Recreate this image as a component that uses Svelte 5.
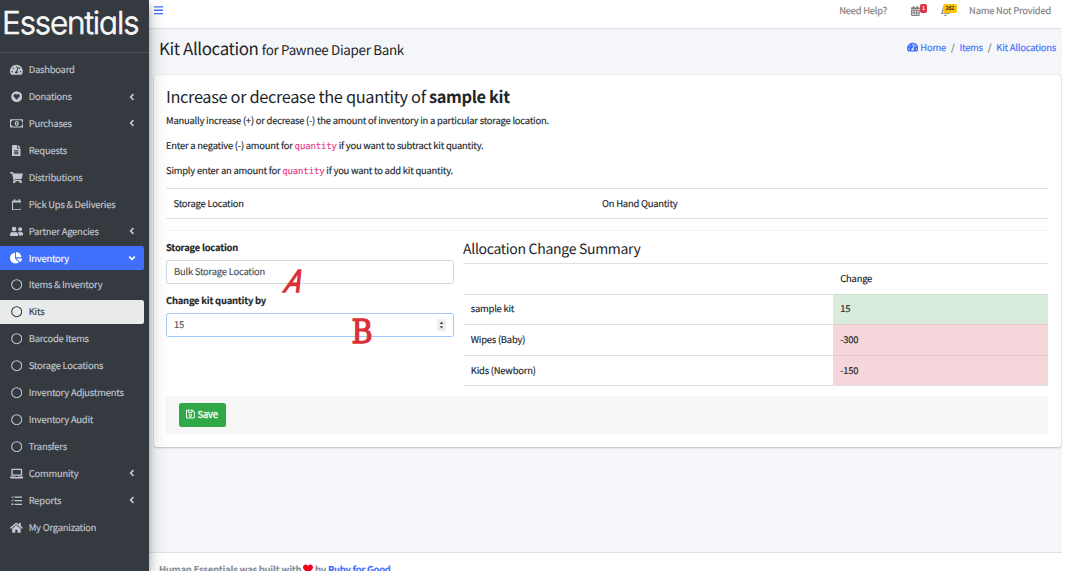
<script>
  const speedo = 'M288 32C128.94 32 0 160.94 0 320c0 52.8 14.25 102.26 39.06 144.8 5.61 9.62 16.3 15.2 27.44 15.2h443c11.14 0 21.83-5.58 27.44-15.2C561.75 422.26 576 372.8 576 320c0-159.06-128.94-288-288-288zm0 64c14.71 0 26.58 10.13 30.32 23.65-1.11 2.26-2.64 4.23-3.45 6.67l-9.22 27.67c-5.13 3.49-10.97 6.01-17.64 6.01-17.67 0-32-14.33-32-32S270.33 96 288 96zM96 384c-17.67 0-32-14.33-32-32s14.33-32 32-32 32 14.33 32 32-14.33 32-32 32zm48-160c-17.67 0-32-14.33-32-32s14.33-32 32-32 32 14.33 32 32-14.33 32-32 32zm246.77-72.41l-61.33 184C343.13 347.33 352 364.54 352 384c0 11.72-3.38 22.55-8.88 32H232.88c-5.5-9.45-8.88-20.28-8.88-32 0-33.94 26.5-61.43 59.9-63.59l61.34-184.01c4.17-12.56 17.73-19.45 30.36-15.17 12.57 4.19 19.35 17.79 15.17 30.36zm14.66 57.2l15.52-46.55c3.47-1.29 7.13-2.23 11.05-2.23 17.67 0 32 14.33 32 32s-14.33 32-32 32c-11.38-.01-21.25-6.1-26.57-15.22zM480 384c-17.67 0-32-14.33-32-32s14.33-32 32-32 32 14.33 32 32-14.33 32-32 32z';
  const heart = 'M462.3 62.6C407.5 15.9 326 24.3 275.7 76.2L256 96.5l-19.7-20.3C186.1 24.3 104.5 15.9 49.7 62.6c-62.8 53.6-66.1 149.8-9.9 207.9l193.5 199.8c12.5 12.9 32.8 12.9 45.3 0l193.5-199.8c56.3-58.1 53-154.3-9.8-207.9z';

  const icons = {
    speedo: { w: 576, d: speedo },
    heartCircle: { w: 512, d: 'M256 8a248 248 0 1 0 0 496 248 248 0 0 0 0-496zM256 390L142 272c-32-34-30-88 6-118 32-26 78-21 108 12 30-33 76-38 108-12 36 30 38 84 6 118z' },
    money: { w: 640, d: 'M36 64h568a36 36 0 0 1 36 36v312a36 36 0 0 1-36 36H36a36 36 0 0 1-36-36V100a36 36 0 0 1 36-36zM112 112a64 64 0 0 1-64 64v160a64 64 0 0 1 64 64h416a64 64 0 0 1 64-64V176a64 64 0 0 1-64-64zM320 144c54 0 96 50 96 112s-42 112-96 112-96-50-96-112 42-112 96-112zM304 192l-24 14v24h20v66h-20v24h80v-24h-20V192z' },
    file: { w: 384, d: 'M224 136V0H24C11 0 0 11 0 24v464c0 13 11 24 24 24h336c13 0 24-11 24-24V160H248c-13 0-24-11-24-24zM96 236h192v40H96zM96 304h192v40H96zM96 372h192v40H96zM384 122v6H256V0h6c6 0 12 3 17 7l98 98c4 5 7 11 7 17z' },
    cart: { w: 576, d: 'M528.12 301.319l47.273-208C578.806 78.301 567.391 64 551.99 64H159.208l-9.166-44.81C147.758 8.021 137.93 0 126.529 0H24C10.745 0 0 10.745 0 24v16c0 13.255 10.745 24 24 24h69.883l70.248 343.435C147.325 417.1 136 435.222 136 456c0 30.928 25.072 56 56 56s56-25.072 56-56c0-15.674-6.447-29.835-16.824-40h209.647C430.447 426.165 424 440.326 424 456c0 30.928 25.072 56 56 56s56-25.072 56-56c0-22.172-12.888-41.332-31.579-50.405l5.517-24.276c3.413-15.018-8.002-29.319-23.403-29.319H218.117l-6.545-32h293.145c11.206 0 20.92-7.754 23.403-18.681z' },
    calendar: { w: 448, d: 'M400 64h-48V12c0-7-5-12-12-12h-24c-7 0-12 5-12 12v52H144V12c0-7-5-12-12-12h-24c-7 0-12 5-12 12v52H48C22 64 0 86 0 112v352c0 27 22 48 48 48h352c27 0 48-21 48-48V112c0-26-21-48-48-48zM48 160h352v304H48z' },
    users: { w: 640, d: 'M192 256a112 112 0 1 0 0-224 112 112 0 0 0 0 224zM269 288h-8a160 160 0 0 1-138 0h-8C51 288 0 339 0 403v29c0 27 22 48 48 48h288c27 0 48-21 48-48v-29c0-64-51-115-115-115zM480 256a96 96 0 1 0 0-192 96 96 0 0 0 0 192zM528 288h-4a128 128 0 0 1-88 0h-4c-20 0-39 6-55 16 24 26 39 60 39 99v45h176c27 0 48-21 48-48 0-62-50-112-112-112z' },
    pie: { w: 544, d: 'M527.79 288H290.5l158.03 158.03c6.04 6.04 15.98 6.53 22.19.68 38.7-36.46 65.32-85.61 73.13-140.86 1.34-9.46-6.51-17.85-16.06-17.85zm-15.83-64.8C503.72 103.74 408.26 8.28 288.8.04 279.68-.59 272 7.1 272 16.24V240h223.77c9.14 0 16.82-7.68 16.19-16.8zM224 288V50.71c0-9.55-8.39-17.4-17.84-16.06C86.99 51.49-4.1 155.6.14 280.37 4.5 408.51 114.83 513.59 243.03 511.98c50.4-.63 96.97-16.87 135.26-44.03 7.9-5.6 8.42-17.23 1.57-24.08L224 288z' },
    circle: { w: 512, d: 'M256 8a248 248 0 1 0 0 496 248 248 0 0 0 0-496zM256 56a200 200 0 1 1 0 400 200 200 0 0 1 0-400z' },
    laptop: { w: 640, d: 'M528 32H112c-26 0-48 22-48 48v288h512V80c0-26-22-48-48-48zM512 304H128V96h384zM624 400H382c-1 19-15 32-34 32h-56c-20 0-34-16-34-32H16c-9 0-16 7-16 16v16c0 35 29 64 64 64h512c35 0 64-29 64-64v-16c0-9-7-16-16-16z' },
    tasks: { w: 512, d: 'M139 45l-68 76-9 8c-5 5-12 5-17 0L4 88l17-17 33 29 68-72zM139 205l-68 76-9 8c-5 5-12 5-17 0L4 248l17-17 33 29 68-72zM64 368a48 48 0 1 0 0 96 48 48 0 0 0 0-96zM176 64h320c9 0 16 6 16 14v30c0 8-7 14-16 14H176c-9 0-16-6-16-14V78c0-8 7-14 16-14zM176 226h320c9 0 16 6 16 14v30c0 8-7 14-16 14H176c-9 0-16-6-16-14v-30c0-8 7-14 16-14zM176 388h320c9 0 16 6 16 14v30c0 8-7 14-16 14H176c-9 0-16-6-16-14v-30c0-8 7-14 16-14z' },
    home: { w: 576, d: 'M280.37 148.26L96 300.11V464a16 16 0 0 0 16 16l112.06-.29a16 16 0 0 0 15.92-16V368a16 16 0 0 1 16-16h64a16 16 0 0 1 16 16v95.64a16 16 0 0 0 16 16.05L464 480a16 16 0 0 0 16-16V300L295.67 148.26a12.19 12.19 0 0 0-15.3 0zM571.6 251.47L488 182.56V44.05a12 12 0 0 0-12-12h-56a12 12 0 0 0-12 12v72.61L318.47 43a48 48 0 0 0-61 0L4.34 251.47a12 12 0 0 0-1.6 16.9l25.5 31A12 12 0 0 0 45.15 301l235.22-193.74a12.19 12.19 0 0 1 15.3 0L530.9 301a12 12 0 0 0 16.9-1.6l25.5-31a12 12 0 0 0-1.7-16.93z' },
    bars: { w: 448, d: 'M16 60h416c9 0 16 7 16 16v32c0 9-7 16-16 16H16c-9 0-16-7-16-16V76c0-9 7-16 16-16zM16 224h416c9 0 16 7 16 16v32c0 9-7 16-16 16H16c-9 0-16-7-16-16v-32c0-9 7-16 16-16zM16 388h416c9 0 16 7 16 16v32c0 9-7 16-16 16H16c-9 0-16-7-16-16v-32c0-9 7-16 16-16z' },
    calendarGrid: { w: 448, d: 'M0 464c0 26 22 48 48 48h352c27 0 48-22 48-48V192H0zM64 240h72v56H64zM188 240h72v56h-72zM312 240h72v56h-72zM64 330h72v50H64zM188 330h72v50h-72zM312 330h72v50h-72zM64 414h72v50H64zM188 414h72v50h-72zM312 414h72v50h-72zM400 64h-48V16c0-9-7-16-16-16h-32c-9 0-16 7-16 16v48H160V16c0-9-7-16-16-16h-32c-9 0-16 7-16 16v48H48C22 64 0 86 0 112v48h448v-48c0-26-21-48-48-48z' },
    bell: { w: 448, d: 'M439.39 362.29c-19.32-20.76-55.47-51.99-55.47-154.29 0-77.7-54.48-139.9-127.94-155.16V32c0-17.67-14.32-32-31.98-32s-31.98 14.33-31.98 32v20.84C118.56 68.1 64.08 130.3 64.08 208c0 102.3-36.15 133.53-55.47 154.29-6 6.45-8.66 14.16-8.61 21.71.11 16.4 12.98 32 32.1 32h383.8c19.12 0 32-15.6 32.1-32 .05-7.55-2.61-15.27-8.61-21.71zM67.53 368c21.22-27.97 44.42-74.33 44.53-159.42 0-.2-.06-.38-.06-.58 0-61.86 50.14-112 112-112s112 50.14 112 112c0 .2-.06.38-.06.58.11 85.1 23.31 131.46 44.53 159.42H67.53zM224 512c35.32 0 63.97-28.65 63.97-64H160.03c0 35.35 28.65 64 63.97 64z' },
    save: { w: 448, d: 'M434 130l-84-84a48 48 0 0 0-34-14H48C22 32 0 54 0 80v352c0 27 22 48 48 48h352c27 0 48-21 48-48V164c0-13-5-25-14-34zM272 80v80H144V80zM394 432H54a6 6 0 0 1-6-6V86a6 6 0 0 1 6-6h42v104c0 13 11 24 24 24h176c13 0 24-11 24-24V84l79 79v263a6 6 0 0 1-5 6zM224 232a88 88 0 1 0 0 176 88 88 0 0 0 0-176zM224 280a40 40 0 1 1 0 80 40 40 0 0 1 0-80z' },
    heart: { w: 512, d: heart }
  };

  const menu = [
    { label: 'Dashboard', icon: 'speedo' },
    { label: 'Donations', icon: 'heartCircle', more: true },
    { label: 'Purchases', icon: 'money', more: true },
    { label: 'Requests', icon: 'file' },
    { label: 'Distributions', icon: 'cart' },
    { label: 'Pick Ups & Deliveries', icon: 'calendar' },
    { label: 'Partner Agencies', icon: 'users', more: true },
    { label: 'Inventory', icon: 'pie', more: true, state: 'open' },
    { label: 'Items & Inventory', icon: 'circle' },
    { label: 'Kits', icon: 'circle', state: 'current' },
    { label: 'Barcode Items', icon: 'circle' },
    { label: 'Storage Locations', icon: 'circle' },
    { label: 'Inventory Adjustments', icon: 'circle' },
    { label: 'Inventory Audit', icon: 'circle' },
    { label: 'Transfers', icon: 'circle' },
    { label: 'Community', icon: 'laptop', more: true },
    { label: 'Reports', icon: 'tasks', more: true },
    { label: 'My Organization', icon: 'home' }
  ];

  const changes = [
    { name: 'sample kit', value: 15 },
    { name: 'Wipes (Baby)', value: -300 },
    { name: 'Kids (Newborn)', value: -150 }
  ];
</script>

{#snippet icon(name, h)}
  <svg class="icon" viewBox="0 0 {icons[name].w} 512" height={h} width={(h * icons[name].w) / 512} fill="currentColor" fill-rule="evenodd" aria-hidden="true"><path d={icons[name].d} /></svg>
{/snippet}

<div class="page">
  <aside class="sidebar">
    <div class="brand"><span>Essentials</span></div>
    <nav class="menu">
      {#each menu as item}
        <a class="item {item.state ?? ''}">
          <span class="glyph">{@render icon(item.icon, item.icon === 'money' || item.icon === 'laptop' || item.icon === 'users' ? 10.8 : 11.4)}</span>
          <span class="label">{item.label}</span>
          {#if item.more}
            <svg class="chevron" viewBox="0 0 8 8" width="8" height="8" fill="none" stroke="currentColor" stroke-width="1.7"><path d="M5.4 1.2 2.7 4l2.7 2.8" /></svg>
          {/if}
        </a>
      {/each}
    </nav>
  </aside>

  <div class="main">
    <header class="navbar">
      <a class="toggle">{@render icon('bars', 10.5)}</a>
      <div class="tools">
        <a class="help">Need Help?</a>
        <a class="tool cal">{@render icon('calendarGrid', 10)}<b class="badge red">1</b></a>
        <a class="tool bell">{@render icon('bell', 10)}<b class="badge yellow">262</b></a>
        <a class="user">Name Not Provided</a>
      </div>
    </header>

    <section class="heading">
      <h1>Kit Allocation <small>for Pawnee Diaper Bank</small></h1>
      <ol class="crumbs">
        <li>{@render icon('speedo', 10)}<a>Home</a></li>
        <li class="sep">/</li>
        <li><a>Items</a></li>
        <li class="sep">/</li>
        <li><a>Kit Allocations</a></li>
      </ol>
    </section>

    <section class="card">
      <h2>Increase or decrease the quantity of <b>sample kit</b></h2>
      <p>Manually increase (+) or decrease (-) the amount of inventory in a particular storage location.</p>
      <p>Enter a negative (-) amount for <code>quantity</code> if you want to subtract kit quantity.</p>
      <p>Simply enter an amount for <code>quantity</code> if you want to add kit quantity.</p>

      <div class="stock"><span>Storage Location</span><span>On Hand Quantity</span></div>

      <div class="columns">
        <form>
          <label for="loc">Storage location</label>
          <div class="field" id="loc">Bulk Storage Location<span class="mark a">A</span></div>
          <label for="qty">Change kit quantity by</label>
          <div class="field focus" id="qty">
            15
            <svg class="spinner" viewBox="0 0 9 12" width="9" height="12"><rect width="9" height="12" fill="#efefef" /><path d="M2.6 4.9 4.5 2.6l1.9 2.3zM2.6 7.3l1.9 2.3 1.9-2.3z" fill="#4b4b4b" /></svg>
            <span class="mark b">B</span>
          </div>
        </form>
        <div class="summary">
          <h3>Allocation Change Summary</h3>
          <div class="row"><span></span><span>Change</span></div>
          {#each changes as c}
            <div class="row"><span>{c.name}</span><span class={c.value > 0 ? 'up' : 'down'}>{c.value}</span></div>
          {/each}
        </div>
      </div>

      <div class="actions"><button>{@render icon('save', 10)}<span>Save</span></button></div>
    </section>

    <footer>Human Essentials was built with <i>{@render icon('heart', 10)}</i> by <a>Ruby for Good</a></footer>
  </div>
</div>

<style>
  :global(body) { background: #fff; overflow: hidden; }
  * { box-sizing: border-box; }
  .page {
    display: flex; width: 1071px; height: 571px; overflow: hidden;
    font: 9.4px/15px "Noto Sans CJK SC", "Noto Sans", sans-serif; color: #212529;
    letter-spacing: -.2px; text-rendering: geometricPrecision; -webkit-text-stroke: .15px;
  }
  .icon { display: block; flex: none; }

  .sidebar { position: relative; z-index: 2; flex: none; width: 149px; background: #343a40; color: #c2c7d0; box-shadow: 0 8px 17px rgba(0,0,0,.25), 0 6px 6px rgba(0,0,0,.22); }
  .brand { height: 53px; border-bottom: 1px solid #4b545c; padding-left: 2px; overflow: hidden; }
  .brand span { display: block; font: 300 31.5px/45px Inter, sans-serif; font-feature-settings: "cv11" 1; letter-spacing: -1.1px; -webkit-text-stroke: .7px; color: #f7f7f5; white-space: nowrap; }
  .menu { display: flex; flex-direction: column; gap: 2.3px; padding: 4.3px 5px 0 0; }
  .item { display: flex; align-items: center; height: 24.64px; padding-left: 7px; border-radius: 0 2.5px 2.5px 0; }
  .glyph { display: flex; justify-content: center; width: 19px; margin-right: 2.7px; }
  .label { flex: 1; white-space: nowrap; }
  .chevron { margin-right: 8.5px; }
  .item.open { background: #3f6ffd; color: #fff; }
  .item.open .chevron { transform: rotate(-90deg); }
  .item.current { background: #e9ebea; color: #343a40; }

  .main { display: flex; flex-direction: column; width: 913px; height: 571px; background: #f4f6f9; }
  .navbar { display: flex; justify-content: space-between; flex: none; height: 29px; padding: 0 11px 0 5px; background: #fff; border-bottom: 1px solid #dee2e6; }
  .navbar a { color: #808080; line-height: 20px; }
  .navbar .toggle { padding-top: 5px; color: #3f6ffd; }
  .tools { display: flex; white-space: nowrap; }
  .help { margin-right: 24px; }
  .tool { position: relative; width: 9px; padding-top: 5.5px; }
  .tool.cal { margin-right: 21px; }
  .tool.bell { margin-right: 19px; }
  .badge { position: absolute; top: 4px; left: 8.5px; height: 9px; border-radius: 2px; padding: 0 2.5px; font-size: 5.5px; line-height: 8.5px; font-weight: 400; }
  .red { background: #dc3545; color: #fff; }
  .yellow { background: #ffc107; color: #1f2d3d; left: 2px; }

  .heading { display: flex; justify-content: space-between; flex: none; height: 46px; padding: 0 6px 0 10px; }
  h1, h2, h3 { -webkit-text-stroke: 0; }
  h1 { margin: 0; font-size: 16.9px; line-height: 38px; letter-spacing: -.4px; font-weight: 400; white-space: nowrap; }
  h1 small { font-size: 13.4px; letter-spacing: -.31px; }
  .crumbs { display: flex; margin: 0; padding: 0; list-style: none; color: #3f6ffd; white-space: nowrap; }
  .crumbs li { display: flex; align-items: center; height: 36px; gap: 2px; }
  .crumbs .sep { width: 13.5px; justify-content: center; color: #6c757d; }

  .card { flex: none; height: 372px; width: 906.5px; margin-left: 5px; padding: 10px 12.5px 0 12px; background: #fff; border-radius: 2.5px; box-shadow: 0 0 1px rgba(0,0,0,.25), 0 1px 2px rgba(0,0,0,.2); }
  h2 { margin: 0 0 3.5px; font-size: 16.4px; letter-spacing: -.36px; line-height: 23px; height: 24px; font-weight: 400; }
  p { margin: 0 0 10px; height: 15px; white-space: nowrap; }
  code { font: 9px/12px "DejaVu Sans Mono", monospace; letter-spacing: -.15px; color: #e83e8c; }
  .stock { display: grid; grid-template-columns: 428.5px 1fr; height: 31px; margin-top: .5px; border: solid #dee2e6; border-width: 1px 0; }
  .stock span { padding: 7px 7.5px; }
  .columns { display: flex; gap: 9.5px; height: 166px; margin-top: 11px; padding-top: 9px; border-top: 1px solid #f3f3f4; }
  form { width: 287.5px; flex: none; }
  label { display: block; font-weight: 700; height: 15px; margin-bottom: 5px; }
  .field { position: relative; display: flex; align-items: center; justify-content: space-between; height: 24px; margin-bottom: 9px; border: 1px solid #d3d8dd; border-radius: 2.5px; padding: 0 7px 1px; color: #495057; }
  .focus { border-color: #a3c9fb; padding-bottom: 0; }
  .mark { position: absolute; color: #d9303a; }
  .mark.a { left: 117px; top: 4px; font: italic 400 32px/32px "Liberation Sans", sans-serif; -webkit-text-stroke: 1.6px; transform: skewX(-14deg) scaleX(.75); }
  .mark.b { left: 183px; top: 1px; font: 400 33px/33px "DejaVu Serif", serif; -webkit-text-stroke: 1.3px; transform: scaleX(.87); }
  .summary { flex: 1; }
  h3 { margin: 0; font-size: 14px; letter-spacing: -.3px; line-height: 19.5px; height: 23.5px; font-weight: 400; }
  .row { display: grid; grid-template-columns: 369.5px 1fr; height: 30.6px; border-top: 1px solid #dee2e6; }
  .row:last-child { height: 31.4px; border-bottom: 1px solid #dee2e6; }
  .row span { margin-top: -1px; padding: 6.8px 7.8px 0; border-top: 1px solid transparent; }
  .row .up { background: #d9ebda; border-color: #cfe0d1; }
  .row .down { background: #f5d6da; border-color: #e5c7cc; }
  .actions { display: flex; align-items: center; height: 38px; padding-left: 12.5px; background: #f7f7f7; }
  button { display: flex; align-items: center; justify-content: center; gap: 2.5px; width: 47px; height: 24px; padding: 0 0 1px; border: 0; border-radius: 2.5px; background: #31a847; color: #fff; font: inherit; letter-spacing: inherit; -webkit-text-stroke: .3px; }

  footer { flex: none; height: 60px; margin-top: 105px; border-top: 1px solid #dee2e6; padding: 9px 10px; background: #fff; color: #869099; font-weight: 700; letter-spacing: -.23px; white-space: nowrap; }
  footer i { display: inline-block; vertical-align: -1px; color: #f5001d; }
  footer a { color: #3f6ffd; }
</style>
